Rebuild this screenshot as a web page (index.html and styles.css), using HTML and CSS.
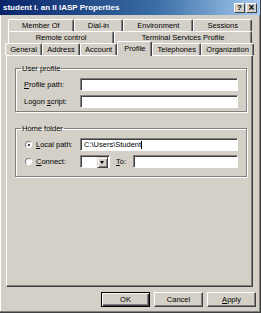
FILE: index.html
```html
<!DOCTYPE html>
<html lang="en">
<head>
  <meta charset="UTF-8" />
  <meta name="viewport" content="width=device-width, initial-scale=1.0"/>
  <title>student I. an II IASP Properties</title>
  <link rel="stylesheet" href="styles.css">
</head>
<body>
  <div class="window">
    <div class="titlebar">
      <span class="title">student I. an II IASP Properties</span>
      <div class="caption-btns">
        <span class="cbtn">?</span>
        <span class="cbtn close">×</span>
      </div>
    </div>

    <div class="dialog">
      <div class="tabs">
        <div class="tab-row back">
          <span class="tab">Member Of</span>
          <span class="tab">Dial-in</span>
          <span class="tab">Environment</span>
          <span class="tab">Sessions</span>
        </div>
        <div class="tab-row back">
          <span class="tab">Remote control</span>
          <span class="tab">Terminal Services Profile</span>
        </div>
        <div class="tab-row front">
          <span class="tab">General</span>
          <span class="tab">Address</span>
          <span class="tab">Account</span>
          <span class="tab active">Profile</span>
          <span class="tab">Telephones</span>
          <span class="tab">Organization</span>
        </div>
      </div>

      <div class="panel">
        <fieldset class="group user-profile">
          <legend>User profile</legend>
          <label class="lbl"><u>P</u>rofile path:</label>
          <div class="textbox"></div>
          <label class="lbl">Logon <u>s</u>cript:</label>
          <div class="textbox"></div>
        </fieldset>

        <fieldset class="group home-folder">
          <legend>Home folder</legend>
          <label class="lbl radio-lbl"><span class="radio checked"></span><span><u>L</u>ocal path:</span></label>
          <div class="textbox">C:\Users\Student<span class="caret"></span></div>
          <label class="lbl radio-lbl"><span class="radio"></span><span><u>C</u>onnect:</span></label>
          <div class="connect">
            <div class="combo"><span class="drop"></span></div>
            <label class="to"><u>T</u>o:</label>
            <div class="textbox"></div>
          </div>
        </fieldset>
      </div>

      <div class="buttons">
        <button class="btn default">OK</button>
        <button class="btn">Cancel</button>
        <button class="btn"><u>A</u>pply</button>
      </div>
    </div>
  </div>
</body>
</html>
```

FILE: styles.css
```css
body {
  margin: 0;
  background: #d4d0c8;
  font-family: "Liberation Sans", Arial, sans-serif;
  font-size: 7.5px;
  color: #000;
}
.window {
  width: 261px;
  height: 313px;
  box-sizing: border-box;
  border-right: 1px solid #404040;
  border-bottom: 1px solid #404040;
  box-shadow: inset -1px -1px #808080, inset 1px 0 #fff;
  display: flex;
  flex-direction: column;
}
.titlebar {
  height: 15px;
  display: flex;
  align-items: center;
  justify-content: space-between;
  padding: 0 3px 0 3px;
  background: linear-gradient(to right, #0a246a, #3a6ea5 60%, #a6caf0);
  color: white;
}
.title {
  font-weight: bold;
  font-size: 8px;
  white-space: nowrap;
}
.caption-btns {
  display: flex;
  gap: 1px;
}
.cbtn {
  width: 9px;
  height: 8px;
  background: #d4d0c8;
  color: #000;
  font-weight: bold;
  font-size: 8px;
  line-height: 8px;
  text-align: center;
  border-top: 1px solid #fff;
  border-left: 1px solid #fff;
  border-right: 1px solid #404040;
  border-bottom: 1px solid #404040;
}
.cbtn.close {
  font-size: 10px;
}
.dialog {
  flex: 1;
  display: flex;
  flex-direction: column;
  padding: 4px 7px 0 6px;
}
.tabs {
  display: flex;
  flex-direction: column;
}
.tab-row {
  display: flex;
  height: 12px;
}
.tab-row.back {
  padding: 0 1px 0 2px;
}
.tab-row.front {
  margin: 0 -1px 0 -1px;
  position: relative;
  z-index: 1;
}
.tab {
  flex: 1 1 auto;
  box-sizing: border-box;
  height: 12px;
  line-height: 11px;
  text-align: center;
  white-space: nowrap;
  border-top: 1px solid #fff;
  border-left: 1px solid #fff;
  border-right: 1px solid #404040;
  box-shadow: inset -1px 0 #808080;
  border-radius: 2px 2px 0 0;
}
.tab.active {
  flex: 0 0 35px;
  height: 15px;
  margin-top: -2px;
  line-height: 14px;
  background: #d4d0c8;
}
.panel {
  height: 232px;
  box-sizing: border-box;
  border-top: 1px solid #fff;
  border-left: 1px solid #fff;
  border-right: 1px solid #404040;
  border-bottom: 1px solid #404040;
  box-shadow: inset -1px -1px #808080;
  padding-top: 8px;
}
.group {
  margin: 0 5px 0 8px;
  padding: 5px 8px 3px 8px;
  border: 1px solid #808080;
  box-shadow: inset 1px 1px #fff, 1px 1px #fff;
  display: grid;
  grid-template-columns: 56px 1fr;
  align-items: center;
  row-gap: 4px;
}
.group legend {
  padding: 0 1px;
  margin-left: -3px;
  line-height: 9px;
}
.home-folder {
  margin-top: 12px;
  padding-bottom: 8px;
}
.lbl {
  white-space: nowrap;
}
.radio-lbl {
  display: flex;
  align-items: center;
  margin-left: 1px;
  gap: 4px;
}
.radio {
  width: 7px;
  height: 7px;
  box-sizing: border-box;
  border-radius: 50%;
  background: #fff;
  border: 1px solid;
  border-color: #808080 #fff #fff #808080;
  position: relative;
}
.radio.checked::after {
  content: "";
  position: absolute;
  left: 1.5px;
  top: 1.5px;
  width: 2px;
  height: 2px;
  border-radius: 50%;
  background: #000;
}
.textbox {
  height: 13px;
  box-sizing: border-box;
  background: #fff;
  border-top: 1px solid #808080;
  border-left: 1px solid #808080;
  border-right: 1px solid #fff;
  border-bottom: 1px solid #fff;
  box-shadow: inset 1px 1px #404040;
  padding-left: 3px;
  line-height: 11px;
  white-space: nowrap;
}
.caret {
  display: inline-block;
  width: 1px;
  height: 8px;
  background: #000;
  vertical-align: middle;
}
.connect {
  display: flex;
  align-items: center;
}
.combo {
  width: 30px;
  height: 13px;
  box-sizing: border-box;
  background: #fff;
  border-top: 1px solid #808080;
  border-left: 1px solid #808080;
  border-right: 1px solid #fff;
  border-bottom: 1px solid #fff;
  box-shadow: inset 1px 1px #404040;
  display: flex;
  justify-content: flex-end;
  padding: 1px;
}
.drop {
  width: 9px;
  height: 9px;
  background: #d4d0c8;
  border-top: 1px solid #d4d0c8;
  border-left: 1px solid #d4d0c8;
  border-right: 1px solid #404040;
  border-bottom: 1px solid #404040;
  box-shadow: inset 1px 1px #fff, inset -1px -1px #808080;
  position: relative;
}
.drop::after {
  content: "";
  position: absolute;
  left: 2px;
  top: 3px;
  border-left: 2.5px solid transparent;
  border-right: 2.5px solid transparent;
  border-top: 3px solid #000;
}
.to {
  margin: 0 7px 0 6px;
}
.connect .textbox {
  flex: 1;
}
.buttons {
  display: flex;
  justify-content: flex-end;
  gap: 4px;
  margin-top: 5px;
  margin-right: -3px;
}
.btn {
  width: 49px;
  height: 15px;
  box-sizing: border-box;
  padding: 0;
  font-family: inherit;
  font-size: 7.5px;
  background: #d4d0c8;
  color: #000;
  border-top: 1px solid #fff;
  border-left: 1px solid #fff;
  border-right: 1px solid #404040;
  border-bottom: 1px solid #404040;
  box-shadow: inset -1px -1px #808080;
}
.btn.default {
  border: 1px solid #000;
  box-shadow: inset 1px 1px #fff, inset -1px -1px #404040, inset -2px -2px #808080;
}
```
